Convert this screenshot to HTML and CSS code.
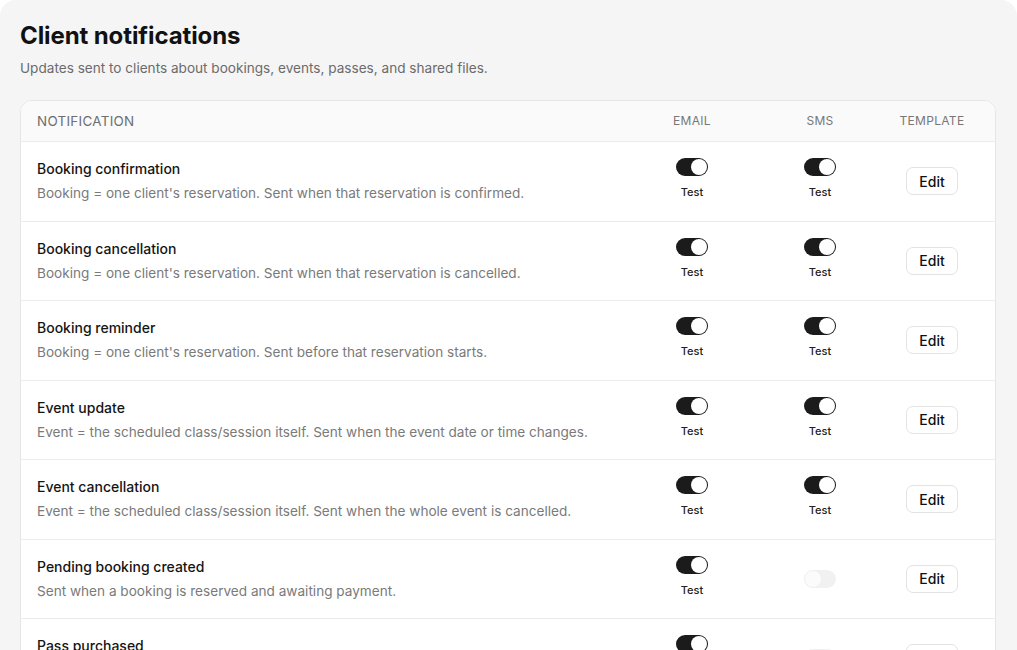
FILE: index.html
```html
<!DOCTYPE html>
<html lang="en">
<head>
<meta charset="utf-8">
<title>Client notifications</title>
<link rel="stylesheet" href="styles.css">
</head>
<body>
<main class="panel">
  <h1 class="title">Client notifications</h1>
  <p class="subtitle">Updates sent to clients about bookings, events, passes, and shared files.</p>
  <section class="card">
    <div class="row head">
      <div class="col-name">NOTIFICATION</div>
      <div class="col-c">EMAIL</div>
      <div class="col-c">SMS</div>
      <div class="col-c">TEMPLATE</div>
    </div>

    <div class="row">
      <div class="col-name"><div class="n-title">Booking confirmation</div><div class="n-desc">Booking = one client's reservation. Sent when that reservation is confirmed.</div></div>
      <div class="col-c"><div class="tg"><span class="toggle on"></span><span class="test">Test</span></div></div>
      <div class="col-c"><div class="tg"><span class="toggle on"></span><span class="test">Test</span></div></div>
      <div class="col-c"><button class="edit">Edit</button></div>
    </div>

    <div class="row">
      <div class="col-name"><div class="n-title">Booking cancellation</div><div class="n-desc">Booking = one client's reservation. Sent when that reservation is cancelled.</div></div>
      <div class="col-c"><div class="tg"><span class="toggle on"></span><span class="test">Test</span></div></div>
      <div class="col-c"><div class="tg"><span class="toggle on"></span><span class="test">Test</span></div></div>
      <div class="col-c"><button class="edit">Edit</button></div>
    </div>

    <div class="row">
      <div class="col-name"><div class="n-title">Booking reminder</div><div class="n-desc">Booking = one client's reservation. Sent before that reservation starts.</div></div>
      <div class="col-c"><div class="tg"><span class="toggle on"></span><span class="test">Test</span></div></div>
      <div class="col-c"><div class="tg"><span class="toggle on"></span><span class="test">Test</span></div></div>
      <div class="col-c"><button class="edit">Edit</button></div>
    </div>

    <div class="row">
      <div class="col-name"><div class="n-title">Event update</div><div class="n-desc">Event = the scheduled class/session itself. Sent when the event date or time changes.</div></div>
      <div class="col-c"><div class="tg"><span class="toggle on"></span><span class="test">Test</span></div></div>
      <div class="col-c"><div class="tg"><span class="toggle on"></span><span class="test">Test</span></div></div>
      <div class="col-c"><button class="edit">Edit</button></div>
    </div>

    <div class="row">
      <div class="col-name"><div class="n-title">Event cancellation</div><div class="n-desc">Event = the scheduled class/session itself. Sent when the whole event is cancelled.</div></div>
      <div class="col-c"><div class="tg"><span class="toggle on"></span><span class="test">Test</span></div></div>
      <div class="col-c"><div class="tg"><span class="toggle on"></span><span class="test">Test</span></div></div>
      <div class="col-c"><button class="edit">Edit</button></div>
    </div>

    <div class="row">
      <div class="col-name"><div class="n-title">Pending booking created</div><div class="n-desc">Sent when a booking is reserved and awaiting payment.</div></div>
      <div class="col-c"><div class="tg"><span class="toggle on"></span><span class="test">Test</span></div></div>
      <div class="col-c"><span class="toggle off"></span></div>
      <div class="col-c"><button class="edit">Edit</button></div>
    </div>

    <div class="row">
      <div class="col-name"><div class="n-title">Pass purchased</div><div class="n-desc">Sent when a client buys a pass.</div></div>
      <div class="col-c"><div class="tg"><span class="toggle on"></span><span class="test">Test</span></div></div>
      <div class="col-c"><span class="toggle off"></span></div>
      <div class="col-c"><button class="edit">Edit</button></div>
    </div>
  </section>
</main>
</body>
</html>
```

FILE: styles.css
```css
* { box-sizing: border-box; }
html, body { margin: 0; padding: 0; background: #ffffff; }
body {
  font-family: Inter, "Noto Sans", "Liberation Sans", sans-serif;
  color: #111111;
  height: 650px;
  overflow: hidden;
}
.panel {
  background: #f5f5f5;
  border-radius: 16px 16px 0 0;
  padding: 20px 21px 0 20px;
  min-height: 650px;
}
.title {
  margin: 0;
  font-size: 24px;
  line-height: 32px;
  font-weight: 700;
  letter-spacing: -0.1px;
  color: #111;
}
.subtitle {
  margin: 6px 0 0;
  font-size: 13.6px;
  line-height: 20px;
  color: #6b6b6b;
}
.card {
  margin-top: 22px;
  background: #ffffff;
  border: 1px solid #e6e6e6;
  border-radius: 12px;
  overflow: hidden;
}
.row {
  display: grid;
  grid-template-columns: 1fr 128px 128px 96px;
  align-items: center;
  padding: 17.25px 15px 17.25px 16px;
  border-top: 1px solid #ececec;
}
.row.head {
  border-top: none;
  background: #fafafa;
  padding: 10px 15px 10px 16px;
  height: 40px;
  font-size: 13.4px;
  line-height: 20px;
  color: #6e6e6e;
  letter-spacing: 0.3px;
}
.row.head .col-c {
  font-size: 12px;
  color: #777;
  letter-spacing: 0.3px;
}
.col-c {
  display: flex;
  justify-content: center;
  align-items: center;
}
.n-title {
  font-size: 14px;
  line-height: 20px;
  font-weight: 500;
  color: #151515;
}
.n-desc {
  margin-top: 4px;
  font-size: 13.6px;
  line-height: 20px;
  color: #7a7a7a;
}
.tg {
  display: flex;
  flex-direction: column;
  align-items: center;
  gap: 9px;
  margin-top: -5px;
}
.toggle {
  display: block;
  position: relative;
  width: 32px;
  height: 18px;
  border-radius: 9px;
}
.toggle::after {
  content: "";
  position: absolute;
  top: 1px;
  width: 16px;
  height: 16px;
  border-radius: 50%;
  background: #ffffff;
}
.toggle.on { background: #1b1b1b; }
.toggle.on::after { right: 1px; }
.toggle.off { background: #f1f1f1; }
.toggle.off::after { left: 1px; background: #fbfbfb; box-shadow: 0 0 0 1px #f0f0f0; }
.test {
  font-size: 11px;
  line-height: 14px;
  font-weight: 500;
  color: #222;
}
.edit {
  font-family: inherit;
  font-size: 14px;
  font-weight: 500;
  color: #111;
  background: #ffffff;
  border: 1px solid #e3e3e3;
  border-radius: 7px;
  height: 28px;
  padding: 0 12px;
  cursor: pointer;
}
```
